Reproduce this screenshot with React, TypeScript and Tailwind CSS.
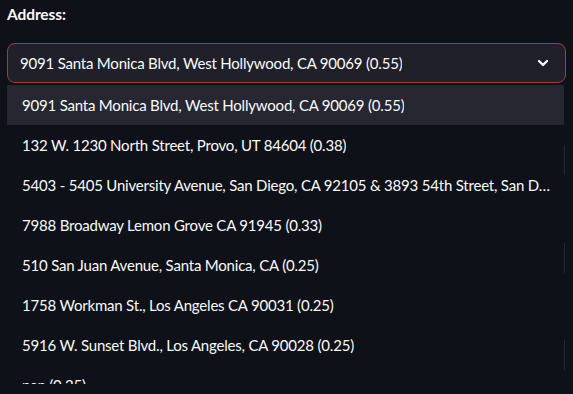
import { ChevronDown } from "lucide-react";

const options = [
  "9091 Santa Monica Blvd, West Hollywood, CA 90069 (0.55)",
  "132 W. 1230 North Street, Provo, UT 84604 (0.38)",
  "5403 - 5405 University Avenue, San Diego, CA 92105 & 3893 54th Street, San Diego, CA 92105 (0.33)",
  "7988 Broadway Lemon Grove CA 91945 (0.33)",
  "510 San Juan Avenue, Santa Monica, CA (0.25)",
  "1758 Workman St., Los Angeles CA 90031 (0.25)",
  "5916 W. Sunset Blvd., Los Angeles, CA 90028 (0.25)",
  "nan (0.25)",
  "1200 N. Vine Street, Los Angeles, CA 90038 (0.25)",
];

export default function App() {
  const selected = options[0];

  return (
    <div className="min-h-screen bg-[#0e1117] text-[#fafafa] font-['Lato','Noto_Sans',sans-serif] px-[7px] pt-[5px] relative">
      <label className="block text-[15.5px] font-bold leading-[18px] tracking-[-0.1px] text-[#fafafa]">Address:</label>

      <div className="mt-5 h-10 rounded-lg border border-[#a8383b] bg-[#1f2029] flex items-center justify-between pl-3 pr-[14px]">
        <span className="text-[15px] tracking-[-0.2px] truncate">{selected}</span>
        <ChevronDown className="h-4 w-4 shrink-0 text-[#fafafa]" strokeWidth={3.5} />
      </div>

      {/* open menu */}
      <div className="mt-[2px] w-[557px] h-[299px] overflow-hidden bg-[#0e1117]">
        {options.map((o, i) => (
          <div
            key={o}
            className={`h-10 flex items-center pl-[15px] pr-[13px] text-[15px] tracking-[-0.2px] ${i === 0 ? "bg-[#262730]" : ""}`}
          >
            <span className="truncate">{o}</span>
          </div>
        ))}
      </div>

      {/* faint edges of widgets behind the menu */}
      <div className="absolute left-[564px] top-[145px] h-[30px] w-px bg-[#262730]" />
      <div className="absolute left-[564px] top-[243px] h-[30px] w-px bg-[#262730]" />
      <div className="absolute left-[564px] top-[340px] h-[30px] w-px bg-[#262730]" />
    </div>
  );
}
